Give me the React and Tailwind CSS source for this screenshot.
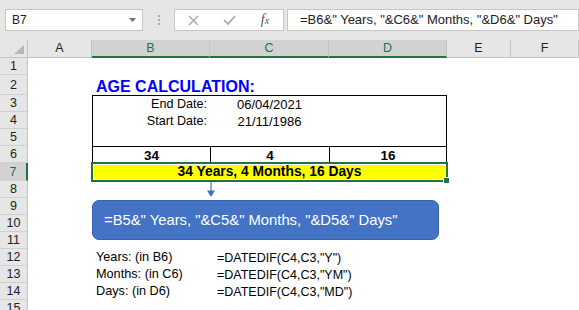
import React from 'react';

// Column widths of the sheet (A..F), row header is 28px wide
const colA = 'w-[64px] shrink-0';
const colB = 'w-[118px] shrink-0';
const colC = 'w-[119px] shrink-0';
const colD = 'w-[118px] shrink-0';
const colE = 'w-[64px] shrink-0';

const Row = ({ n, h, sel, children }) => (
  <div className={`flex ${h}`}>
    <div
      className={`w-[28px] shrink-0 flex items-center justify-center pt-[1px] border-b border-b-[#d0d0d0] text-[12.5px] ${
        sel
          ? 'bg-[#d2d2d2] text-[#217346] border-r-2 border-r-[#217346]'
          : 'bg-[#e6e6e6] text-[#222] border-r border-r-[#c4c4c4]'
      }`}
    >
      {n}
    </div>
    {children}
  </div>
);

const ColHead = ({ label, w, sel }) => (
  <div
    className={`${w} flex items-center justify-center border-r border-r-[#c4c4c4] text-[12.5px] ${
      sel
        ? 'bg-[#d2d2d2] text-[#217346] border-b-2 border-b-[#217346]'
        : 'bg-[#e6e6e6] text-[#222] border-b border-b-[#c4c4c4]'
    }`}
  >
    {label}
  </div>
);

const App = () => {
  return (
    <div className="relative w-[579px] h-[310px] overflow-hidden bg-white font-['Liberation_Sans',Arial,sans-serif] text-black">
      {/* formula bar */}
      <div className="h-[40px] bg-[#e6e6e6] flex items-start pt-[9px]">
        <div className="ml-[5px] w-[138px] h-[22px] bg-white border border-[#c6c6c6] flex items-center justify-between px-[6px]">
          <span className="text-[12px] text-[#222]">B7</span>
          <svg width="7" height="4" viewBox="0 0 7 4">
            <path d="M0 0h7L3.5 4z" fill="#6f6f6f" />
          </svg>
        </div>
        <div className="ml-[15px] mt-[6px] flex flex-col gap-[2px]">
          <div className="w-[2px] h-[2px] bg-[#a8a8a8]" />
          <div className="w-[2px] h-[2px] bg-[#a8a8a8]" />
          <div className="w-[2px] h-[2px] bg-[#a8a8a8]" />
        </div>
        <div className="ml-[14px] w-[110px] h-[22px] bg-white border border-[#c6c6c6] flex items-center">
          <div className="w-[36px] flex justify-center">
            <svg width="11" height="11" viewBox="0 0 11 11">
              <path d="M1 1l9 9M10 1l-9 9" stroke="#a6a6a6" strokeWidth="1.3" />
            </svg>
          </div>
          <div className="w-[36px] flex justify-center">
            <svg width="13" height="10" viewBox="0 0 13 10">
              <path d="M1 5l4 4 7-8" stroke="#a6a6a6" strokeWidth="1.6" fill="none" />
            </svg>
          </div>
          <div className="w-[36px] flex justify-center">
            <span className="font-['Liberation_Serif',serif] italic text-[14px] text-[#555] leading-none">
              f<span className="text-[10px]">x</span>
            </span>
          </div>
        </div>
        <div className="ml-[3px] flex-1 h-[22px] bg-white border border-[#c6c6c6] flex items-center pl-[12px]">
          <span className="text-[13px] text-[#222] whitespace-nowrap">
            =B6&amp;" Years, "&amp;C6&amp;" Months, "&amp;D6&amp;" Days"
          </span>
        </div>
      </div>

      {/* column headers */}
      <div className="flex h-[18px]">
        <div className="w-[28px] shrink-0 bg-[#e6e6e6] border-r border-b border-[#c4c4c4] flex items-end justify-end pr-[3px] pb-[3px]">
          <svg width="10" height="9" viewBox="0 0 10 9">
            <path d="M10 0v9H0z" fill="#b8b8b8" />
          </svg>
        </div>
        <ColHead label="A" w={colA} />
        <ColHead label="B" w={colB} sel />
        <ColHead label="C" w={colC} sel />
        <ColHead label="D" w={colD} sel />
        <ColHead label="E" w={colE} />
        <ColHead label="F" w="flex-1" />
      </div>

      {/* sheet rows */}
      <Row n={1} h="h-[17px]" />
      <Row n={2} h="h-[20px]">
        <div className={colA} />
        <div className={`${colB} flex items-end pl-[4px] overflow-visible`}>
          <span className="text-[16px] font-bold leading-none text-[#0000ff] whitespace-nowrap">
            AGE CALCULATION:
          </span>
        </div>
      </Row>
      <Row n={3} h="h-[17px]">
        <div className={colA} />
        <div className={`${colB} border-l border-t border-black flex items-end justify-end pr-[3px] pb-[1px]`}>
          <span className="text-[12.6px] leading-none">End Date:</span>
        </div>
        <div className={`${colC} border-t border-black flex items-end justify-center pb-[1px]`}>
          <span className="text-[13px] leading-none">06/04/2021</span>
        </div>
        <div className={`${colD} border-t border-r border-black`} />
      </Row>
      <Row n={4} h="h-[17px]">
        <div className={colA} />
        <div className={`${colB} border-l border-black flex items-end justify-end pr-[3px] pb-[1px]`}>
          <span className="text-[12.6px] leading-none">Start Date:</span>
        </div>
        <div className={`${colC} flex items-end justify-center pb-[1px]`}>
          <span className="text-[13px] leading-none">21/11/1986</span>
        </div>
        <div className={`${colD} border-r border-black`} />
      </Row>
      <Row n={5} h="h-[17px]">
        <div className={colA} />
        <div className={`${colB} border-l border-black`} />
        <div className={colC} />
        <div className={`${colD} border-r border-black`} />
      </Row>
      <Row n={6} h="h-[17px]">
        <div className={colA} />
        <div className={`${colB} border-l border-t border-black flex items-end justify-center pb-[1px]`}>
          <span className="text-[13.5px] font-bold leading-none">34</span>
        </div>
        <div className={`${colC} border-l border-t border-black flex items-end justify-center pb-[1px]`}>
          <span className="text-[13.5px] font-bold leading-none">4</span>
        </div>
        <div className={`${colD} border-l border-t border-r border-black flex items-end justify-center pb-[1px]`}>
          <span className="text-[13.5px] font-bold leading-none">16</span>
        </div>
      </Row>
      <Row n={7} h="h-[18px]" sel>
        <div className={colA} />
        <div className="w-[355px] shrink-0 bg-[#ffff00] flex items-end justify-center pb-[2px]">
          <span className="text-[13.8px] font-bold leading-none whitespace-nowrap">
            34 Years, 4 Months, 16 Days
          </span>
        </div>
      </Row>
      <Row n={8} h="h-[17px]" />
      <Row n={9} h="h-[17px]" />
      <Row n={10} h="h-[17px]" />
      <Row n={11} h="h-[17px]" />
      {[
        ['Years: (in B6)', '=DATEDIF(C4,C3,"Y")', 12],
        ['Months: (in C6)', '=DATEDIF(C4,C3,"YM")', 13],
        ['Days: (in D6)', '=DATEDIF(C4,C3,"MD")', 14],
      ].map(([label, formula, n]) => (
        <Row key={n} n={n} h="h-[17px]">
          <div className={colA} />
          <div className={`${colB} flex items-end pl-[4px] pb-[2px]`}>
            <span className="text-[12.7px] leading-none whitespace-nowrap">{label}</span>
          </div>
          <div className={`${colC} flex items-end pl-[7px] pb-[2px] overflow-visible`}>
            <span className="text-[12.5px] leading-none whitespace-nowrap">{formula}</span>
          </div>
        </Row>
      ))}
      <Row n={15} h="h-[17px]" />

      {/* selection frame on B7:D7 */}
      <div className="absolute left-[91px] top-[162px] w-[357px] h-[20px] border-2 border-[#217346] shadow-[inset_0_0_0_1px_white]" />
      <div className="absolute left-[443px] top-[177px] w-[7px] h-[7px] bg-[#217346] border border-white" />

      {/* arrow */}
      <svg className="absolute left-[206px] top-[182px]" width="10" height="16" viewBox="0 0 10 16">
        <path d="M5 0v9" stroke="#4472c4" strokeWidth="1.2" />
        <path d="M1 8.5h8L5 15z" fill="#4472c4" />
      </svg>

      {/* callout shape */}
      <div className="absolute left-[92px] top-[200px] w-[347px] h-[40px] rounded-[7px] bg-[#4472c4] border border-[#3a63ad] flex items-center pl-[11px]">
        <span className="text-[14.8px] text-white whitespace-nowrap">
          =B5&amp;" Years, "&amp;C5&amp;" Months, "&amp;D5&amp;" Days"
        </span>
      </div>
    </div>
  );
};

export default App;
